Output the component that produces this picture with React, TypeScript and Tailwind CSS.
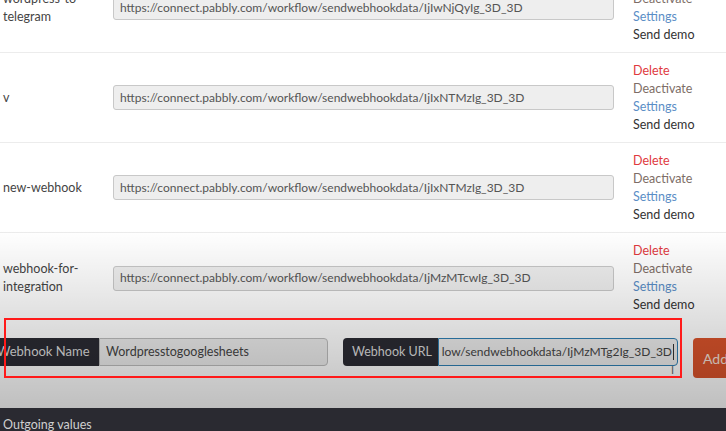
import React from 'react';

type Hook = {
  name: string[];
  url: string;
};

const hooks: Hook[] = [
  { name: ['wordpress-to', 'telegram'], url: 'https://connect.pabbly.com/workflow/sendwebhookdata/IjIwNjQyIg_3D_3D' },
  { name: ['v'], url: 'https://connect.pabbly.com/workflow/sendwebhookdata/IjIxNTMzIg_3D_3D' },
  { name: ['new-webhook'], url: 'https://connect.pabbly.com/workflow/sendwebhookdata/IjIxNTMzIg_3D_3D' },
  { name: ['webhook-for-', 'integration'], url: 'https://connect.pabbly.com/workflow/sendwebhookdata/IjMzMTcwIg_3D_3D' },
];

const HookRow = ({ hook, last }: { hook: Hook; last: boolean }) => (
  <div className={`flex h-[90px] items-center ${last ? '' : 'border-b border-[#ececec]'}`}>
    <div className="w-[113px] shrink-0 pl-[3px] text-[12.5px] leading-[18px] text-[#444]">
      {hook.name.map((line) => (
        <div key={line}>{line}</div>
      ))}
    </div>
    <div className="flex h-[25px] w-[501px] shrink-0 items-center rounded-[3px] border border-[#c8c8c8] bg-[#eeeeee] px-[6px] text-[12px] whitespace-nowrap text-[#555]">
      {hook.url}
    </div>
    <div className="ml-[19px] flex shrink-0 flex-col text-[12.5px] leading-[18px] whitespace-nowrap">
      <span className="text-[#e0393e]">Delete</span>
      <span className="text-[#7d6d66]">Deactivate</span>
      <span className="text-[#5b8ec6]">Settings</span>
      <span className="text-[#333]">Send demo</span>
    </div>
  </div>
);

export default function App() {
  return (
    <div className="relative h-[431px] w-[726px] overflow-hidden bg-white font-['Lato',sans-serif]">
      {/* webhook list */}
      <div className="-mt-[37px]">
        {hooks.map((hook, i) => (
          <HookRow key={i} hook={hook} last={i === hooks.length - 1} />
        ))}
      </div>

      {/* add form */}
      <div className="mt-[15px] -ml-[8px] flex h-[40px] items-start whitespace-nowrap">
        <div className="flex h-[28px] w-[107px] shrink-0 items-center rounded-l-[4px] bg-[#2b2b33] pl-[5px] text-[13px] text-[#dcdcdc]">
          Webhook Name
        </div>
        <div className="flex h-[28px] w-[229px] shrink-0 items-center rounded-r-[4px] border border-[#bdbdbd] bg-[#ececec] px-[6px] text-[12.5px] text-[#444]">
          Wordpresstogooglesheets
        </div>
        <div className="ml-[15px] flex h-[28px] w-[95px] shrink-0 items-center rounded-l-[4px] bg-[#2b2b33] pl-[9px] text-[12.5px] text-[#dcdcdc]">
          Webhook URL
        </div>
        <div className="flex h-[28px] w-[240px] shrink-0 items-center justify-end overflow-hidden rounded-r-[4px] border border-[#2f7fb3] bg-[#ececec] pr-[3px] text-[12px] text-[#444]">
          <span>low/sendwebhookdata/IjMzMTg2Ig_3D_3D</span>
          <span className="ml-[1px] h-[16px] w-px shrink-0 bg-[#333]" />
        </div>
        <div className="ml-[15px] flex h-[40px] shrink-0 items-center rounded-[4px] bg-[#d9532b] pl-[10px] pr-[14px] text-[14px] text-[#f3e0d8]">
          Add
        </div>
      </div>

      {/* bottom bar */}
      <div className="mt-[30px] h-[40px] bg-[#2a2a31] pl-[3px] pt-[8px] text-[12.5px] text-[#cfcfcf]">Outgoing values</div>

      {/* screen vignette */}
      <div className="pointer-events-none absolute inset-x-0 top-[230px] h-[178px] bg-gradient-to-b from-transparent to-black/25" />

      {/* annotation box */}
      <div className="pointer-events-none absolute left-[4px] top-[318px] h-[60px] w-[678px] border-2 border-[#ff1a1a]" />

      {/* text cursor */}
      <span className="pointer-events-none absolute left-[671px] top-[364px] text-[11px] leading-none text-[#555]">I</span>
    </div>
  );
}
